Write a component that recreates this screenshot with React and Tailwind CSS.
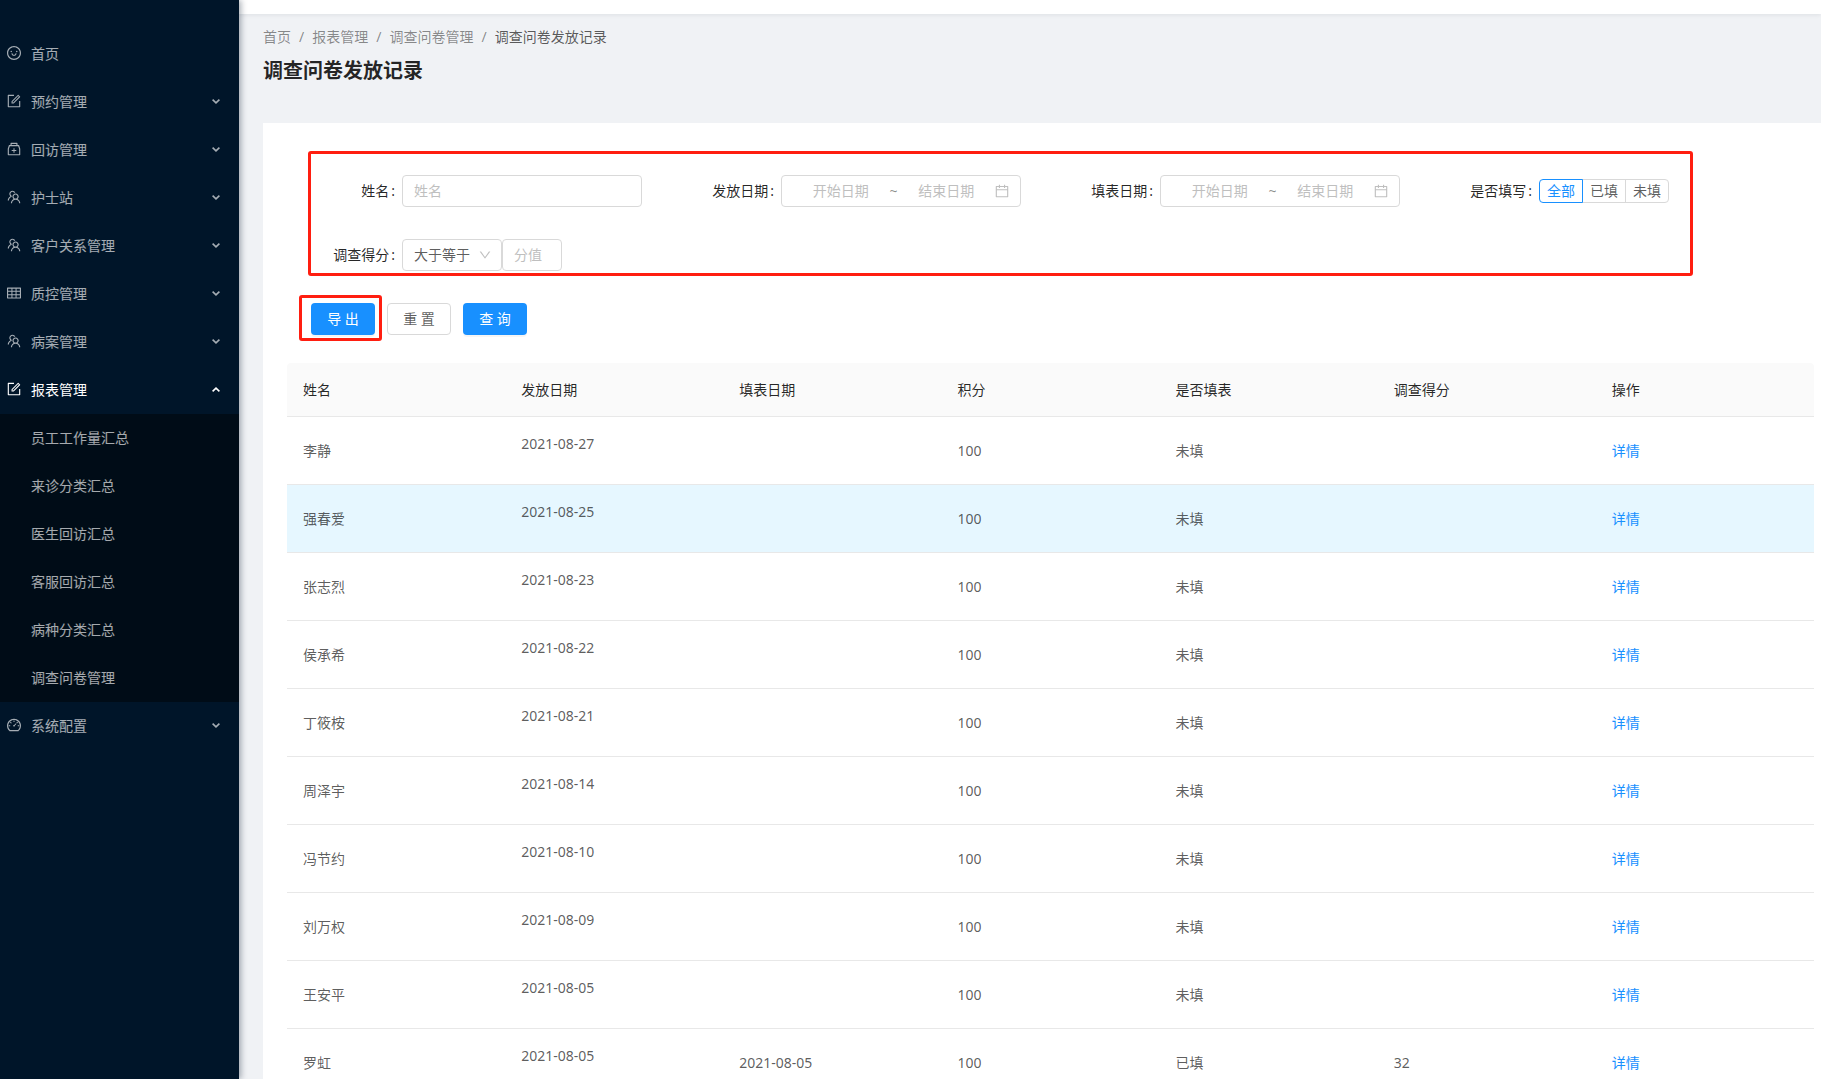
import React, { useState } from 'react';
import {
    AiOutlineSmile,
    AiOutlineForm,
    AiOutlineMedicineBox,
    AiOutlineTeam,
    AiOutlineTable,
    AiOutlineDashboard,
    AiOutlineCalendar,
    AiOutlineDown
} from 'react-icons/ai';

const menuItems = [
    { key: 'home', title: '首页', icon: AiOutlineSmile },
    { key: 'appointment', title: '预约管理', icon: AiOutlineForm, children: [] },
    { key: 'visit', title: '回访管理', icon: AiOutlineMedicineBox, children: [] },
    { key: 'nurse', title: '护士站', icon: AiOutlineTeam, children: [] },
    { key: 'customer', title: '客户关系管理', icon: AiOutlineTeam, children: [] },
    { key: 'quality', title: '质控管理', icon: AiOutlineTable, children: [] },
    { key: 'record', title: '病案管理', icon: AiOutlineTeam, children: [] },
    {
        key: 'report',
        title: '报表管理',
        icon: AiOutlineForm,
        children: ['员工工作量汇总', '来诊分类汇总', '医生回访汇总', '客服回访汇总', '病种分类汇总', '调查问卷管理']
    },
    { key: 'system', title: '系统配置', icon: AiOutlineDashboard, children: [] }
];

const columns = ['姓名', '发放日期', '填表日期', '积分', '是否填表', '调查得分', '操作'];

const records = [
    { id: 1, name: '李静', sendDate: '2021-08-27', fillDate: '', points: 100, status: '未填', score: '' },
    { id: 2, name: '强春爱', sendDate: '2021-08-25', fillDate: '', points: 100, status: '未填', score: '' },
    { id: 3, name: '张志烈', sendDate: '2021-08-23', fillDate: '', points: 100, status: '未填', score: '' },
    { id: 4, name: '侯承希', sendDate: '2021-08-22', fillDate: '', points: 100, status: '未填', score: '' },
    { id: 5, name: '丁筱桉', sendDate: '2021-08-21', fillDate: '', points: 100, status: '未填', score: '' },
    { id: 6, name: '周泽宇', sendDate: '2021-08-14', fillDate: '', points: 100, status: '未填', score: '' },
    { id: 7, name: '冯节约', sendDate: '2021-08-10', fillDate: '', points: 100, status: '未填', score: '' },
    { id: 8, name: '刘万权', sendDate: '2021-08-09', fillDate: '', points: 100, status: '未填', score: '' },
    { id: 9, name: '王安平', sendDate: '2021-08-05', fillDate: '', points: 100, status: '未填', score: '' },
    { id: 10, name: '罗虹', sendDate: '2021-08-05', fillDate: '2021-08-05', points: 100, status: '已填', score: 32 }
];

const MenuArrow = ({ open }) => (
    <svg className="w-2 h-[5px]" viewBox="0 0 8 5" fill="none" stroke="currentColor" strokeWidth="1.6">
        <path d={open ? 'M0.6 4.4 L4 1.2 L7.4 4.4' : 'M0.6 0.6 L4 3.8 L7.4 0.6'} />
    </svg>
);

const Sidebar = () => {
    const [openKey, setOpenKey] = useState('report');

    return (
        <aside className="relative z-10 w-[239px] shrink-0 bg-[#001529] pt-[30px] shadow-[2px_0_6px_rgba(0,21,41,0.35)]">
            <nav>
                {menuItems.map(item => {
                    const Icon = item.icon;
                    const open = openKey === item.key;
                    return (
                        <div key={item.key}>
                            <button
                                type="button"
                                onClick={() => setOpenKey(open ? '' : item.key)}
                                className={`flex h-12 w-full items-center pb-[2px] pl-[6px] pr-[19px] cursor-pointer hover:text-white ${open ? 'text-white' : 'text-white/65'}`}
                            >
                                <Icon className="size-4 mr-[9px]" />
                                <span>{item.title}</span>
                                {item.children && <span className="ml-auto"><MenuArrow open={open} /></span>}
                            </button>
                            {open && item.children && (
                                <ul className="bg-[#000c17]">
                                    {item.children.map(child => (
                                        <li key={child}>
                                            <a href="#" className="flex h-12 items-center pb-[2px] pl-[31px] text-white/65 hover:text-white">{child}</a>
                                        </li>
                                    ))}
                                </ul>
                            )}
                        </div>
                    );
                })}
            </nav>
        </aside>
    );
};

const FormItem = ({ label, htmlFor, children }) => (
    <div className="flex h-10 items-center">
        <label htmlFor={htmlFor} className="w-[115px] shrink-0 pb-[2px] pr-[7px] text-right text-black/85">
            {label}<span className="ml-[2px]">:</span>
        </label>
        {children}
    </div>
);

const RangePicker = ({ id }) => (
    <div className="flex h-8 w-60 items-center rounded border border-[#d9d9d9] pl-[11px] pr-[10px]">
        <input id={id} placeholder="开始日期" className="min-w-0 flex-1 pb-[2px] text-center outline-none placeholder:text-[#bfbfbf]" />
        <span className="w-[10px] pb-[2px] text-center text-black/45">~</span>
        <input aria-label="结束日期" placeholder="结束日期" className="min-w-0 flex-1 pb-[2px] text-center outline-none placeholder:text-[#bfbfbf]" />
        <AiOutlineCalendar className="size-4 text-black/25" />
    </div>
);

const SearchForm = () => {
    const [name, setName] = useState('');
    const [filled, setFilled] = useState('全部');

    return (
        <form className="relative grid grid-cols-4 gap-y-6 pr-[11px]">
            <FormItem label="姓名" htmlFor="name">
                <input
                    id="name"
                    placeholder="姓名"
                    value={name}
                    onChange={(e) => setName(e.target.value)}
                    className="h-8 w-60 rounded border border-[#d9d9d9] px-[11px] pb-[2px] outline-none placeholder:text-[#bfbfbf]"
                />
            </FormItem>
            <FormItem label="发放日期" htmlFor="sendDate">
                <RangePicker id="sendDate" />
            </FormItem>
            <FormItem label="填表日期" htmlFor="fillDate">
                <RangePicker id="fillDate" />
            </FormItem>
            <FormItem label="是否填写" htmlFor="filled-全部">
                <div className="flex shrink-0">
                    {['全部', '已填', '未填'].map(option => (
                        <label
                            key={option}
                            className={`-ml-px flex h-6 cursor-pointer items-center border px-[7px] pb-[2px] first:ml-0 first:rounded-l last:rounded-r ${filled === option ? 'relative border-[#1890ff] text-[#1890ff]' : 'border-[#d9d9d9]'}`}
                        >
                            <input
                                id={`filled-${option}`}
                                type="radio"
                                name="filled"
                                checked={filled === option}
                                onChange={() => setFilled(option)}
                                className="sr-only"
                            />
                            {option}
                        </label>
                    ))}
                </div>
            </FormItem>
            <FormItem label="调查得分" htmlFor="compare">
                <div className="relative">
                    <select id="compare" className="h-8 w-[100px] appearance-none rounded border border-[#d9d9d9] bg-white px-[11px] pb-[2px] outline-none">
                        <option>大于等于</option>
                        <option>小于等于</option>
                    </select>
                    <AiOutlineDown className="pointer-events-none absolute right-[10px] top-[9px] size-[14px] text-black/25" />
                </div>
                <input aria-label="分值" placeholder="分值" className="h-8 w-[60px] rounded border border-[#d9d9d9] px-[11px] pb-[2px] outline-none placeholder:text-[#bfbfbf]" />
            </FormItem>
            <div className="pointer-events-none absolute -top-5 -bottom-[1px] left-[21px] right-[121px] rounded-[3px] border-3 border-[#ff1e10]" />
        </form>
    );
};

const RecordTable = () => (
    <table className="w-full table-fixed border-separate border-spacing-0 text-left">
        <thead className="bg-[#fafafa] text-black/85">
            <tr>
                {columns.map(column => (
                    <th key={column} className="border-b border-[#e8e8e8] p-4 font-normal first:rounded-tl last:rounded-tr">{column}</th>
                ))}
            </tr>
        </thead>
        <tbody>
            {records.map(record => (
                <tr key={record.id} className={record.id === 2 ? 'bg-[#e6f7ff]' : 'hover:bg-[#e6f7ff]'}>
                    <td className="border-b border-[#e8e8e8] p-4">{record.name}</td>
                    <td className="border-b border-[#e8e8e8] p-4"><p className="mb-[14px]">{record.sendDate}</p></td>
                    <td className="border-b border-[#e8e8e8] p-4">{record.fillDate}</td>
                    <td className="border-b border-[#e8e8e8] p-4">{record.points}</td>
                    <td className="border-b border-[#e8e8e8] p-4">{record.status}</td>
                    <td className="border-b border-[#e8e8e8] p-4">{record.score}</td>
                    <td className="border-b border-[#e8e8e8] p-4"><a href="#" className="text-[#1890ff]">详情</a></td>
                </tr>
            ))}
        </tbody>
    </table>
);

const App = () => {
    return (
        <div className="flex h-screen overflow-hidden bg-[#f0f2f5] font-['Noto_Sans','Noto_Sans_CJK_SC',sans-serif] text-[14px] leading-[21px] text-black/65">
            <Sidebar />
            <main className="min-w-0 flex-1 overflow-y-auto [scrollbar-width:none]">
                <header className="h-[14px] bg-white shadow-[0_1px_4px_rgba(0,21,41,0.08)]" />
                <div className="pl-6 pt-3">
                    <nav className="flex gap-2 text-black/45">
                        <a href="#">首页</a>
                        <span>/</span>
                        <a href="#">报表管理</a>
                        <span>/</span>
                        <a href="#">调查问卷管理</a>
                        <span>/</span>
                        <span className="text-black/65">调查问卷发放记录</span>
                    </nav>
                    <h1 className="mt-2 text-[20px] leading-8 font-bold text-black/85">调查问卷发放记录</h1>
                </div>
                <section className="ml-6 mt-9 bg-white pl-6 pr-[7px] pt-12">
                    <SearchForm />
                    <div className="mb-7 ml-6 mt-7 flex gap-3">
                        <div className="relative">
                            <button type="button" className="h-8 w-16 cursor-pointer rounded bg-[#1890ff] pb-[2px] text-white shadow-[0_2px_0_rgba(0,0,0,0.04)]">导 出</button>
                            <div className="pointer-events-none absolute -left-3 -right-[7px] -top-2 -bottom-[6px] rounded-[3px] border-3 border-[#ff1e10]" />
                        </div>
                        <button type="button" className="h-8 w-16 cursor-pointer rounded border border-[#d9d9d9] bg-white pb-[2px]">重 置</button>
                        <button type="button" className="h-8 w-16 cursor-pointer rounded bg-[#1890ff] pb-[2px] text-white shadow-[0_2px_0_rgba(0,0,0,0.04)]">查 询</button>
                    </div>
                    <RecordTable />
                </section>
            </main>
        </div>
    );
};

export default App;
